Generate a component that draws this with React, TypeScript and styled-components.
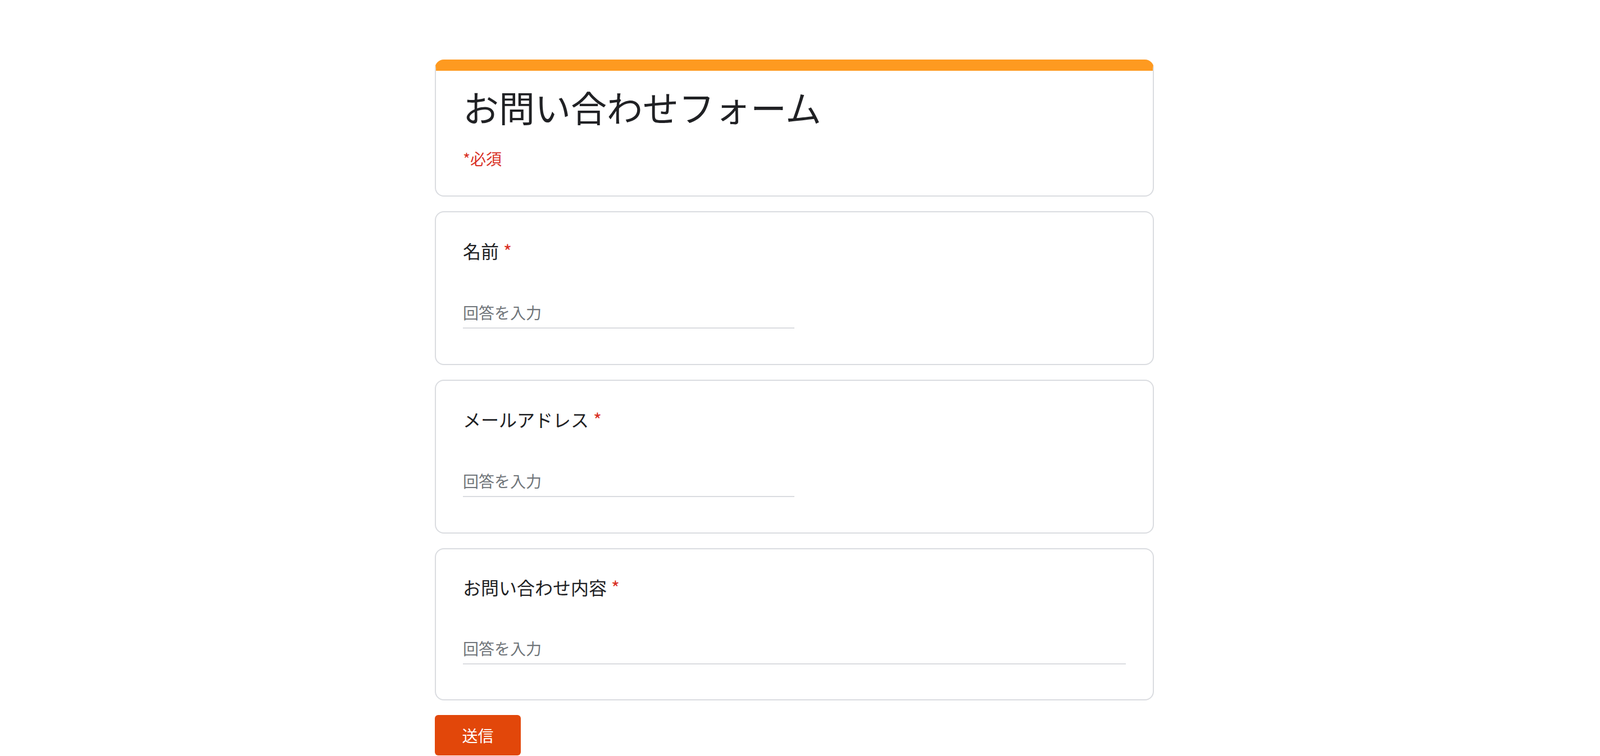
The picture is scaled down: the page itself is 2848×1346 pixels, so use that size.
import styled, { createGlobalStyle } from "styled-components";

const GlobalStyle = createGlobalStyle`
  body {
    margin: 0;
    background: #ffffff;
    font-family: "Noto Sans CJK JP", "Noto Sans", sans-serif;
    color: #202124;
  }
`;

type Question = {
  label: string;
  full?: boolean;
  multiline?: boolean;
};

const questions: Question[] = [
  { label: "名前" },
  { label: "メールアドレス" },
  { label: "お問い合わせ内容", full: true, multiline: true },
];

function App() {
  return (
    <>
      <GlobalStyle />
      <Page>
        <Form onSubmit={(e) => e.preventDefault()}>
          <HeaderCard>
            <Title>お問い合わせフォーム</Title>
            <Required>*必須</Required>
          </HeaderCard>

          {questions.map((q) => (
            <QuestionCard key={q.label} $compact={q.multiline}>
              <Label>
                {q.label}
                <Star>*</Star>
              </Label>
              <Field
                $full={q.full}
                $compact={q.multiline}
                placeholder="回答を入力"
              />
            </QuestionCard>
          ))}

          <SubmitButton type="submit">送信</SubmitButton>
        </Form>
      </Page>
    </>
  );
}

export default App;

const Page = styled.div`
  padding: 106px 20px 0 0;
`;

const Form = styled.form`
  width: 1280px;
  margin: 0 auto;
  display: flex;
  flex-direction: column;
  gap: 26px;
`;

const HeaderCard = styled.div`
  border: 2px solid #dadce0;
  border-top: 20px solid #fe9a20;
  border-radius: 16px;
  padding: 25px 48px 45px;
  background: #fff;
`;

const Title = styled.h1`
  margin: 0;
  font-size: 64px;
  line-height: 1.2;
  font-weight: 400;
  color: #202124;
`;

const Required = styled.p`
  margin: 33px 0 0;
  font-size: 28px;
  line-height: 42px;
  color: #d93025;
`;

const QuestionCard = styled.div<{ $compact?: boolean }>`
  border: 2px solid #dadce0;
  border-radius: 16px;
  padding: ${(p) => (p.$compact ? "43px 48px 62px" : "44px 48px 63px")};
  background: #fff;
`;

const Label = styled.div`
  font-size: 32px;
  line-height: 48px;
  color: #202124;
`;

const Star = styled.span`
  color: #d93025;
  margin-left: 8px;
`;

const Field = styled.input<{ $full?: boolean; $compact?: boolean }>`
  display: block;
  box-sizing: border-box;
  width: ${(p) => (p.$full ? "100%" : "50%")};
  height: ${(p) => (p.$compact ? "55px" : "56px")};
  margin-top: 59px;
  padding: 0;
  border: none;
  border-bottom: 2px solid #dadce0;
  outline: none;
  background: transparent;
  font-family: "Noto Sans CJK JP", "Noto Sans", sans-serif;
  font-size: 28px;
  color: #202124;

  &::placeholder {
    color: #70757a;
  }
`;

const SubmitButton = styled.button`
  align-self: flex-start;
  width: 153px;
  height: 72px;
  border: none;
  border-radius: 6px;
  background: #e2470a;
  color: #ffffff;
  font-family: "Noto Sans CJK JP", "Noto Sans", sans-serif;
  font-size: 28px;
  cursor: pointer;
`;
